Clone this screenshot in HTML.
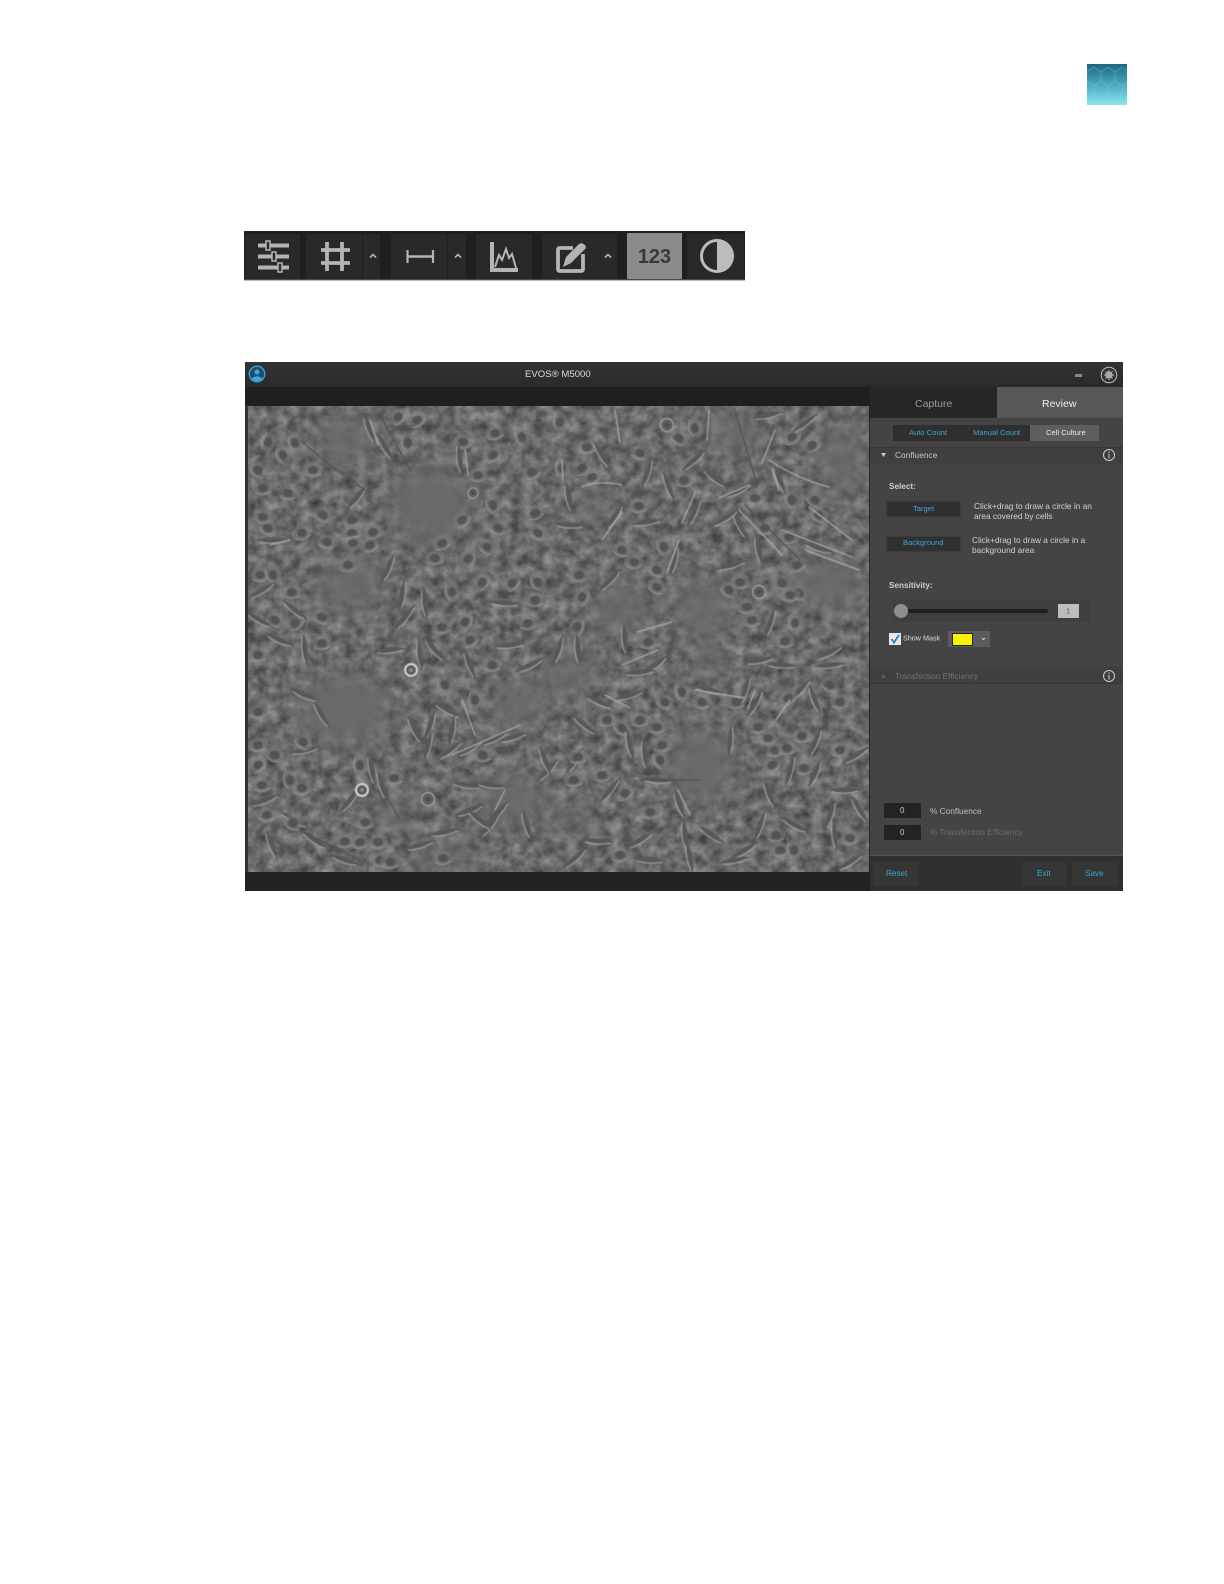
<!DOCTYPE html>
<html><head><meta charset="utf-8">
<style>
html,body{margin:0;padding:0;background:#fff}
body{width:1224px;height:1584px;position:relative;overflow:hidden;font-family:"Liberation Sans",sans-serif}
.a{position:absolute}
.t{position:absolute;white-space:nowrap;line-height:1;transform:translateY(-50%);filter:blur(.25px)}
.b{color:#3ea6d6}
.w{color:#d2d2d2}
.btn{position:absolute;background:#303030;box-shadow:0 0 2px #2c2c2c}
</style></head>
<body>
<!-- logo -->
<svg class="a" style="left:1087px;top:64px" width="40" height="41" viewBox="0 0 40 41">
<defs><linearGradient id="lg" x1="0" y1="0" x2="0" y2="1"><stop offset="0" stop-color="#1b6680"/><stop offset=".5" stop-color="#4aa9bd"/><stop offset="1" stop-color="#8ae4f2"/></linearGradient></defs>
<rect width="40" height="41" fill="url(#lg)"/>
<path d="M0 8L7 3L14 8V17L7 22L0 17M14 8L21 3L28 8V17L21 22L14 17M28 8L35 3L40 7M28 17L35 22L40 18M7 22V31L14 36M21 22V31L14 36V41M21 31L28 36M35 22V31L28 36" fill="none" stroke="#8fd0de" stroke-opacity=".4" stroke-width=".8"/>
</svg>

<!-- toolbar -->
<svg class="a" style="left:244px;top:231px" width="501" height="50" viewBox="244 231 501 50">
<rect x="244" y="231" width="501" height="49" fill="#1f1f1f"/>
<rect x="244" y="279.500" width="501" height="1" fill="#777"/>
<g fill="#292929">
<rect x="245" y="234" width="55" height="45"/><rect x="306" y="234" width="56" height="45"/><rect x="363" y="234" width="17" height="45"/>
<rect x="391" y="234" width="56" height="45"/><rect x="448" y="234" width="18" height="45"/><rect x="476" y="234" width="56" height="45"/>
<rect x="542" y="234" width="75" height="45"/><rect x="687" y="234" width="57" height="45"/>
</g>
<rect x="627" y="233" width="55" height="46" fill="#8b8b8b" rx="1"/>
<g stroke="#b4b4b4" fill="none">
<path d="M258 245.500H289M258 256.500H289M258 267.500H289" stroke-width="4"/>
<g fill="#292929" stroke-width="1.500"><rect x="266" y="241" width="4" height="9"/><rect x="272" y="252" width="4" height="9"/><rect x="278" y="263" width="4" height="9"/></g>
<path d="M327 242V271M342 242V271M321 250H350M321 263H350" stroke-width="3.800"/>
<path d="M407.500 250V263M433 250V263" stroke-width="2.200"/><path d="M408 256.500H433" stroke-width="2.600"/>
<path d="M492 242V270H518" stroke-width="4"/>
<path d="M495 267L499 255L502 260L506 249L509 258L512 254L516 268" stroke-width="2"/>
<path d="M583 254V269Q583 271 581 271H560Q558 271 558 269V250Q558 248 560 248H573" stroke-width="3.800"/>
<path d="M370 257.500L373 254.500L376 257.500M455 257.500L458 254.500L461 257.500M605 257.500L608 254.500L611 257.500" stroke-width="1.600"/>
</g>
<path d="M563 267L566 257L579 244Q582 242 585 245Q587 248 584 250L571 263Z" fill="#b4b4b4"/>
<circle cx="717" cy="256" r="15.500" fill="#292929" stroke="#bcbcbc" stroke-width="3"/>
<path d="M717 240.500A15.500 15.500 0 0 1 717 271.500Z" fill="#bcbcbc"/>
<text x="654.500" y="263" text-anchor="middle" font-family="'Liberation Sans',sans-serif" font-weight="700" font-size="20" fill="#383838">123</text>
</svg>

<!-- figure -->
<div class="a" style="left:245px;top:362px;width:878px;height:529px;background:#262626"></div>
<div class="a" style="left:245px;top:362px;width:878px;height:25px;background:linear-gradient(#333,#2a2a2a)"></div>
<div class="a" style="left:245px;top:387px;width:625px;height:19px;background:#1f1f1f"></div>
<div class="a" style="left:245px;top:872px;width:625px;height:19px;background:#222"></div>
<div class="a" style="left:245px;top:405px;width:3px;height:467px;background:#333"></div>

<!-- microscope image -->
<svg class="a" style="left:248px;top:406px" width="621" height="466" viewBox="248 406 621 466">
<defs>
<filter id="nz" x="0" y="0" width="100%" height="100%" color-interpolation-filters="sRGB">
<feTurbulence type="fractalNoise" baseFrequency=".09" numOctaves="3" seed="11"/>
<feColorMatrix values=".75 0 0 0 .04 .75 0 0 0 .04 .75 0 0 0 .04 0 0 0 0 1"/>
</filter>
<filter id="bl" x="-20%" y="-20%" width="140%" height="140%"><feGaussianBlur stdDeviation="14"/></filter>
<filter id="sf"><feGaussianBlur stdDeviation=".55"/></filter>
<mask id="mk" maskUnits="userSpaceOnUse" x="248" y="406" width="621" height="466">
<rect x="248" y="406" width="621" height="466" fill="#fff"/>
<g filter="url(#bl)" fill="#000">
<ellipse cx="430" cy="505" rx="42" ry="42"/><ellipse cx="345" cy="440" rx="30" ry="25"/><ellipse cx="350" cy="585" rx="35" ry="26"/>
<ellipse cx="345" cy="709" rx="46" ry="38"/><ellipse cx="395" cy="812" rx="22" ry="14"/><ellipse cx="518" cy="705" rx="24" ry="26"/>
<ellipse cx="512" cy="800" rx="34" ry="26"/><ellipse cx="445" cy="858" rx="40" ry="12"/><ellipse cx="828" cy="583" rx="36" ry="26"/>
<ellipse cx="842" cy="462" rx="22" ry="38"/><ellipse cx="732" cy="433" rx="22" ry="24"/><ellipse cx="702" cy="607" rx="28" ry="32"/>
<ellipse cx="595" cy="507" rx="24" ry="14"/><ellipse cx="619" cy="607" rx="32" ry="22"/><ellipse cx="702" cy="765" rx="32" ry="42"/>
<ellipse cx="569" cy="675" rx="22" ry="26"/><ellipse cx="709" cy="665" rx="16" ry="16"/><ellipse cx="569" cy="819" rx="16" ry="20"/>
</g></mask>
<g id="c"><ellipse rx="10" ry="8" fill="#7c7c7c" opacity=".45"/><ellipse rx="5" ry="4" fill="#535353"/><path d="M-8 4Q0 9 8 3" stroke="#969696" stroke-width=".9" fill="none"/></g>
<g id="s"><path d="M-17 0Q0-5 17 0Q0 5-17 0" fill="#585858"/><path d="M-13 2Q0 5 13 1" stroke="#a2a2a2" stroke-width="1" fill="none"/></g>
<g id="r"><circle r="6" fill="#595959"/><circle r="6" fill="none" stroke="#dcdcdc" stroke-width="1.800"/><circle r="2" fill="#888"/></g>
<g id="q"><circle r="6.500" fill="#5e5e5e"/><circle r="6.500" fill="none" stroke="#9c9c9c" stroke-width="1.500"/><circle r="2.500" fill="#4e4e4e"/></g>
</defs>
<rect x="248" y="406" width="621" height="466" fill="#6a6a6a"/>
<rect x="248" y="406" width="621" height="466" filter="url(#nz)" mask="url(#mk)" opacity=".55"/>
<g filter="url(#sf)">
<use href="#c" transform="translate(295 443)rotate(80)"/><use href="#c" transform="translate(283 455)rotate(70)"/><use href="#c" transform="translate(268 442)rotate(110)"/><use href="#c" transform="translate(313 470)"/><use href="#c" transform="translate(288 493)rotate(10)"/><use href="#c" transform="translate(263 488)"/><use href="#c" transform="translate(263 517)rotate(20)"/><use href="#c" transform="translate(268 528)rotate(30)"/><use href="#c" transform="translate(302 533)rotate(-10)"/><use href="#c" transform="translate(323 515)rotate(30)"/><use href="#c" transform="translate(352 520)"/><use href="#c" transform="translate(352 533)rotate(-10)"/><use href="#c" transform="translate(373 532)rotate(-10)"/><use href="#c" transform="translate(353 543)rotate(170)"/><use href="#c" transform="translate(327 542)rotate(15)"/><use href="#c" transform="translate(370 545)rotate(-20)"/><use href="#c" transform="translate(348 565)"/><use href="#s" transform="translate(357 497)rotate(-50)"/><use href="#s" transform="translate(388 568)rotate(-65)"/><use href="#c" transform="translate(292 592)"/><use href="#c" transform="translate(260 575)"/><use href="#c" transform="translate(273 575)rotate(60)"/><use href="#s" transform="translate(370 430)rotate(70)"/><use href="#s" transform="translate(385 447)rotate(60)"/><use href="#c" transform="translate(398 417)rotate(-40)"/><use href="#c" transform="translate(417 420)rotate(-30)"/><use href="#c" transform="translate(408 443)rotate(80)"/><use href="#c" transform="translate(463 442)"/><use href="#s" transform="translate(460 460)rotate(85)"/><use href="#c" transform="translate(495 433)rotate(-10)"/><use href="#c" transform="translate(493 455)rotate(-30)"/><use href="#c" transform="translate(522 437)rotate(70)"/><use href="#c" transform="translate(532 472)rotate(-20)"/><use href="#c" transform="translate(478 475)"/><use href="#c" transform="translate(462 520)rotate(-40)"/><use href="#c" transform="translate(493 505)rotate(70)"/><use href="#c" transform="translate(498 528)rotate(20)"/><use href="#c" transform="translate(535 513)rotate(-20)"/><use href="#c" transform="translate(538 533)rotate(40)"/><use href="#c" transform="translate(487 547)rotate(40)"/><use href="#c" transform="translate(435 558)"/><use href="#c" transform="translate(442 543)rotate(-20)"/><use href="#c" transform="translate(468 559)rotate(-60)"/><use href="#c" transform="translate(482 582)rotate(-50)"/><use href="#c" transform="translate(512 583)rotate(-40)"/><use href="#c" transform="translate(452 592)rotate(80)"/><use href="#s" transform="translate(402 595)rotate(-80)"/><use href="#s" transform="translate(425 603)rotate(85)"/><use href="#c" transform="translate(535 600)"/><use href="#c" transform="translate(538 582)rotate(60)"/>
<use href="#c" transform="translate(275 620)rotate(30)"/><use href="#c" transform="translate(295 623)rotate(-30)"/><use href="#c" transform="translate(322 617)rotate(30)"/><use href="#s" transform="translate(405 617)rotate(-50)"/><use href="#c" transform="translate(442 627)"/><use href="#c" transform="translate(465 622)rotate(-60)"/><use href="#s" transform="translate(505 603)rotate(5)"/><use href="#c" transform="translate(528 623)"/><use href="#c" transform="translate(258 470)rotate(40)"/><use href="#s" transform="translate(262 590)rotate(-30)"/><use href="#s" transform="translate(272 540)rotate(0)"/><use href="#s" transform="translate(295 610)rotate(40)"/><use href="#s" transform="translate(260 620)rotate(30)"/>
<use href="#c" transform="translate(560 422)rotate(90)"/><use href="#c" transform="translate(587 447)"/><use href="#s" transform="translate(602 455)rotate(60)"/><use href="#c" transform="translate(562 468)rotate(90)"/><use href="#c" transform="translate(582 468)rotate(-30)"/><use href="#c" transform="translate(592 477)rotate(-20)"/><use href="#c" transform="translate(679 438)rotate(40)"/><use href="#c" transform="translate(695 428)rotate(80)"/><use href="#c" transform="translate(640 453)rotate(20)"/><use href="#s" transform="translate(694 460)rotate(-40)"/><use href="#s" transform="translate(647 473)rotate(-70)"/><use href="#c" transform="translate(684 480)"/><use href="#s" transform="translate(669 487)rotate(70)"/><use href="#c" transform="translate(639 506)"/><use href="#s" transform="translate(569 498)rotate(80)"/><use href="#s" transform="translate(614 517)rotate(-55)"/><use href="#s" transform="translate(647 522)rotate(-8)"/><use href="#s" transform="translate(570 525)rotate(5)"/><use href="#s" transform="translate(694 512)rotate(-65)"/><use href="#c" transform="translate(622 550)rotate(20)"/><use href="#c" transform="translate(664 547)rotate(70)"/><use href="#c" transform="translate(680 547)rotate(80)"/><use href="#c" transform="translate(579 575)"/><use href="#s" transform="translate(610 580)rotate(-45)"/><use href="#c" transform="translate(634 562)"/><use href="#c" transform="translate(657 570)rotate(30)"/><use href="#c" transform="translate(657 587)rotate(30)"/><use href="#c" transform="translate(582 597)rotate(-60)"/><use href="#c" transform="translate(577 627)rotate(-70)"/><use href="#s" transform="translate(674 560)rotate(-75)"/><use href="#s" transform="translate(732 565)rotate(-15)"/><use href="#c" transform="translate(740 582)rotate(10)"/><use href="#c" transform="translate(729 590)rotate(40)"/><use href="#c" transform="translate(782 583)rotate(20)"/><use href="#c" transform="translate(799 593)rotate(30)"/><use href="#c" transform="translate(790 595)"/><use href="#c" transform="translate(747 607)"/><use href="#c" transform="translate(752 620)"/><use href="#c" transform="translate(795 623)rotate(90)"/><use href="#s" transform="translate(770 623)rotate(-70)"/><use href="#c" transform="translate(755 498)"/><use href="#s" transform="translate(739 490)rotate(-25)"/><use href="#s" transform="translate(715 478)rotate(40)"/><use href="#c" transform="translate(792 500)rotate(70)"/><use href="#c" transform="translate(815 500)rotate(40)"/><use href="#c" transform="translate(819 515)rotate(40)"/><use href="#c" transform="translate(812 445)rotate(-30)"/><use href="#c" transform="translate(792 437)rotate(-30)"/><use href="#s" transform="translate(805 423)rotate(-35)"/><use href="#c" transform="translate(765 528)"/><use href="#s" transform="translate(740 525)rotate(65)"/><use href="#s" transform="translate(725 518)rotate(-30)"/><use href="#s" transform="translate(759 550)rotate(80)"/><use href="#c" transform="translate(789 537)"/><use href="#s" transform="translate(819 548)rotate(20)"/><use href="#c" transform="translate(797 565)rotate(-20)"/><use href="#s" transform="translate(780 480)rotate(70)"/><use href="#s" transform="translate(768 415)rotate(-10)"/>
<!-- lower left -->
<use href="#s" transform="translate(305 695)rotate(25)"/><use href="#s" transform="translate(322 715)rotate(60)"/><use href="#c" transform="translate(258 712)"/><use href="#c" transform="translate(258 745)"/><use href="#s" transform="translate(305 750)rotate(-10)"/><use href="#c" transform="translate(275 755)rotate(20)"/><use href="#c" transform="translate(303 742)rotate(40)"/><use href="#c" transform="translate(258 765)rotate(-40)"/><use href="#c" transform="translate(290 780)rotate(80)"/><use href="#c" transform="translate(262 785)"/><use href="#c" transform="translate(302 788)"/><use href="#s" transform="translate(265 800)rotate(-20)"/><use href="#c" transform="translate(267 815)"/><use href="#s" transform="translate(295 820)rotate(30)"/><use href="#c" transform="translate(293 823)rotate(30)"/><use href="#s" transform="translate(272 845)rotate(70)"/><use href="#s" transform="translate(315 840)rotate(35)"/><use href="#s" transform="translate(345 860)rotate(20)"/><use href="#c" transform="translate(365 822)"/><use href="#c" transform="translate(345 841)"/><use href="#c" transform="translate(360 842)"/><use href="#c" transform="translate(378 842)"/><use href="#c" transform="translate(380 860)"/><use href="#c" transform="translate(258 655)"/><use href="#c" transform="translate(322 643)"/><use href="#s" transform="translate(280 640)rotate(25)"/><use href="#s" transform="translate(305 650)rotate(85)"/><use href="#s" transform="translate(390 650)rotate(-5)"/><use href="#s" transform="translate(420 655)rotate(85)"/><use href="#s" transform="translate(435 650)rotate(50)"/><use href="#c" transform="translate(470 640)rotate(-30)"/><use href="#s" transform="translate(470 665)rotate(70)"/><use href="#c" transform="translate(492 665)"/><use href="#s" transform="translate(530 665)rotate(-25)"/><use href="#s" transform="translate(510 645)rotate(-5)"/><use href="#c" transform="translate(445 685)rotate(60)"/><use href="#c" transform="translate(475 700)rotate(90)"/><use href="#s" transform="translate(430 725)rotate(-70)"/><use href="#s" transform="translate(415 730)rotate(65)"/><use href="#s" transform="translate(428 745)rotate(-75)"/><use href="#s" transform="translate(448 710)rotate(30)"/><use href="#s" transform="translate(452 730)rotate(-80)"/><use href="#s" transform="translate(450 750)rotate(-35)"/><use href="#s" transform="translate(470 748)rotate(-30)"/><use href="#s" transform="translate(495 738)rotate(-25)"/><use href="#s" transform="translate(513 737)rotate(-15)"/><use href="#s" transform="translate(467 785)rotate(10)"/><use href="#s" transform="translate(492 785)rotate(8)"/><use href="#s" transform="translate(350 800)rotate(-50)"/><use href="#s" transform="translate(372 770)rotate(80)"/><use href="#s" transform="translate(382 785)rotate(75)"/><use href="#c" transform="translate(360 765)rotate(90)"/><use href="#c" transform="translate(394 778)"/><use href="#s" transform="translate(420 845)rotate(-15)"/><use href="#s" transform="translate(445 832)rotate(-10)"/><use href="#c" transform="translate(443 858)"/><use href="#c" transform="translate(390 862)"/><use href="#s" transform="translate(470 810)rotate(-20)"/><use href="#s" transform="translate(498 812)rotate(-45)"/><use href="#s" transform="translate(490 825)rotate(-50)"/><use href="#s" transform="translate(480 820)rotate(40)"/><use href="#s" transform="translate(527 825)rotate(75)"/><use href="#s" transform="translate(548 770)rotate(-45)"/><use href="#s" transform="translate(545 760)rotate(70)"/><use href="#c" transform="translate(483 755)"/>
<!-- lower right -->
<use href="#s" transform="translate(558 650)rotate(-70)"/><use href="#s" transform="translate(578 650)rotate(85)"/><use href="#s" transform="translate(625 640)rotate(85)"/><use href="#c" transform="translate(648 642)"/><use href="#s" transform="translate(655 665)rotate(-35)"/><use href="#s" transform="translate(640 672)rotate(-5)"/><use href="#s" transform="translate(600 702)rotate(25)"/><use href="#s" transform="translate(630 695)rotate(-15)"/><use href="#c" transform="translate(665 702)rotate(30)"/><use href="#c" transform="translate(682 692)rotate(80)"/><use href="#c" transform="translate(702 702)rotate(10)"/><use href="#c" transform="translate(736 702)"/><use href="#s" transform="translate(710 690)rotate(15)"/><use href="#s" transform="translate(755 703)rotate(-60)"/><use href="#c" transform="translate(607 720)"/><use href="#s" transform="translate(585 725)rotate(40)"/><use href="#c" transform="translate(622 728)rotate(40)"/><use href="#c" transform="translate(640 720)"/><use href="#c" transform="translate(657 727)"/><use href="#c" transform="translate(662 745)"/><use href="#s" transform="translate(630 745)rotate(80)"/><use href="#s" transform="translate(645 755)rotate(85)"/><use href="#s" transform="translate(575 760)rotate(-55)"/><use href="#c" transform="translate(578 757)"/><use href="#c" transform="translate(574 780)"/><use href="#c" transform="translate(660 760)rotate(70)"/><use href="#s" transform="translate(730 740)rotate(-85)"/><use href="#c" transform="translate(602 775)"/><use href="#s" transform="translate(610 790)rotate(-50)"/><use href="#c" transform="translate(625 793)rotate(-30)"/><use href="#c" transform="translate(650 812)"/><use href="#s" transform="translate(658 780)rotate(5)"/><use href="#s" transform="translate(680 805)rotate(70)"/><use href="#s" transform="translate(685 835)rotate(85)"/><use href="#s" transform="translate(712 835)rotate(35)"/><use href="#s" transform="translate(640 840)rotate(-30)"/><use href="#s" transform="translate(598 841)rotate(5)"/><use href="#c" transform="translate(620 855)"/><use href="#s" transform="translate(575 858)rotate(-40)"/><use href="#s" transform="translate(650 860)rotate(5)"/><use href="#s" transform="translate(690 858)rotate(80)"/><use href="#s" transform="translate(745 690)rotate(-70)"/><use href="#s" transform="translate(760 660)rotate(-10)"/><use href="#c" transform="translate(785 641)"/><use href="#s" transform="translate(782 665)rotate(5)"/><use href="#s" transform="translate(830 652)rotate(-25)"/><use href="#s" transform="translate(830 665)rotate(-5)"/><use href="#s" transform="translate(800 690)rotate(-45)"/><use href="#c" transform="translate(788 698)rotate(-30)"/><use href="#c" transform="translate(830 685)rotate(30)"/><use href="#c" transform="translate(840 702)"/><use href="#s" transform="translate(815 700)rotate(70)"/><use href="#c" transform="translate(758 727)"/><use href="#c" transform="translate(768 738)"/><use href="#c" transform="translate(775 750)"/><use href="#c" transform="translate(787 748)"/><use href="#c" transform="translate(802 736)"/><use href="#s" transform="translate(815 742)rotate(-65)"/><use href="#c" transform="translate(840 750)"/><use href="#s" transform="translate(856 755)rotate(-30)"/><use href="#s" transform="translate(790 770)rotate(-75)"/><use href="#c" transform="translate(772 765)rotate(-30)"/><use href="#c" transform="translate(804 768)"/><use href="#s" transform="translate(815 773)rotate(-65)"/><use href="#s" transform="translate(845 790)rotate(0)"/><use href="#s" transform="translate(770 795)rotate(70)"/><use href="#s" transform="translate(830 815)rotate(-70)"/><use href="#s" transform="translate(860 810)rotate(60)"/><use href="#s" transform="translate(760 825)rotate(-70)"/><use href="#c" transform="translate(776 835)"/><use href="#s" transform="translate(795 825)rotate(30)"/><use href="#c" transform="translate(780 850)"/><use href="#c" transform="translate(794 850)rotate(80)"/><use href="#s" transform="translate(835 835)rotate(85)"/><use href="#c" transform="translate(850 838)"/><use href="#s" transform="translate(745 850)rotate(-30)"/><use href="#s" transform="translate(735 860)rotate(-10)"/><use href="#s" transform="translate(850 862)rotate(-30)"/>
<use href="#q" transform="translate(473 493)scale(.8)"/><use href="#r" transform="translate(411 670)"/><use href="#r" transform="translate(362 790)"/><use href="#q" transform="translate(428 799)"/><use href="#q" transform="translate(667 425)"/><use href="#q" transform="translate(759 592)"/>
<g fill="none" stroke-linecap="round">
<path d="M769 460Q800 480 829 487M772 470L779 490M719 498L749 485M739 510L782 555M782 530L852 557M805 550L859 570M809 507L852 540M695 493L682 523M622 512L602 540M709 410L707 440M775 430L762 463M615 410L620 443M582 487Q600 480 622 485M679 540L667 573M562 460L563 480M465 450L468 475M370 420L378 445M290 540L270 545M495 810L505 790M462 700L475 735M452 755L520 725M790 700L776 720M678 790L690 815M622 665L658 650M637 632L672 622M695 690L745 698M605 695L630 708M755 690L748 708" stroke="#ababab" stroke-width="1.200"/>
<path d="M734 408L755 477M330 465L365 490M300 440L335 470M380 415L410 470M745 505L800 560M640 780L700 780M380 785L400 820M300 830L360 860" stroke="#535353" stroke-width="1.400"/>
</g>
</g>
</svg>

<!-- right panel -->
<div class="a" style="left:870px;top:387px;width:253px;height:504px;background:#444"></div>
<div class="a" style="left:870px;top:387px;width:127px;height:31px;background:#262626"></div>
<div class="a" style="left:997px;top:387px;width:126px;height:31px;background:#575757"></div>
<div class="a" style="left:893px;top:425px;width:137px;height:16px;background:#2f2f2f"></div>
<div class="a" style="left:1030px;top:425px;width:69px;height:16px;background:#5e5e5e"></div>
<div class="a" style="left:870px;top:447px;width:253px;height:16px;background:#3f3f3f;border-top:1px solid #363636"></div>
<div class="a" style="left:893px;top:600px;width:197px;height:22px;background:#3f3f3f"></div>
<div class="a" style="left:870px;top:667px;width:253px;height:16px;background:#3f3f3f;border-bottom:1px solid #363636"></div>
<div class="a" style="left:870px;top:855px;width:253px;height:36px;background:#303030;border-top:1px solid #555;box-sizing:border-box"></div>

<div class="t" style="left:915px;top:403.500px;font-size:10.500px;color:#9a9a9a">Capture</div>
<div class="t" style="left:1042px;top:403.500px;font-size:10.500px;color:#eee">Review</div>
<div class="t b" style="left:909px;top:432.500px;font-size:7.600px">Auto Count</div>
<div class="t b" style="left:973px;top:432.500px;font-size:7.600px">Manual Count</div>
<div class="t" style="left:1046px;top:432.500px;font-size:7.600px;color:#e8e8e8">Cell Culture</div>
<svg class="a" style="left:880px;top:452px" width="7" height="6"><path d="M1 1H6L3.500 5Z" fill="#ccc"/></svg>
<div class="t" style="left:895px;top:455px;font-size:8.400px;color:#c4c4c4">Confluence</div>
<svg class="a" style="left:1102px;top:448px" width="14" height="14"><circle cx="7" cy="7" r="5.500" fill="none" stroke="#ccc"/><path d="M7 6V10.500M7 3.500V5" stroke="#ccc"/></svg>
<div class="t" style="left:889px;top:487px;font-size:8.200px;font-weight:700;color:#cfcfcf">Select:</div>
<div class="btn" style="left:887px;top:502px;width:73px;height:14px"></div>
<div class="t b" style="left:913px;top:509px;font-size:7.600px">Target</div>
<div class="t w" style="left:974px;top:506px;font-size:8.300px">Click+drag to draw a circle in an</div>
<div class="t w" style="left:974px;top:516px;font-size:8.300px">area covered by cells</div>
<div class="btn" style="left:887px;top:537px;width:73px;height:14px"></div>
<div class="t b" style="left:903px;top:543px;font-size:7.600px">Background</div>
<div class="t w" style="left:972px;top:540px;font-size:8.300px">Click+drag to draw a circle in a</div>
<div class="t w" style="left:972px;top:550px;font-size:8.300px">background area</div>
<div class="t" style="left:889px;top:586px;font-size:8.200px;font-weight:700;color:#cfcfcf">Sensitivity:</div>
<div class="a" style="left:905px;top:609px;width:143px;height:4px;background:#202020;border-radius:2px"></div>
<div class="a" style="left:894px;top:604px;width:14px;height:14px;border-radius:50%;background:#8e8e8e"></div>
<div class="a" style="left:1058px;top:604px;width:21px;height:14px;background:#bdbdbd"></div>
<div class="t" style="left:1066px;top:611px;font-size:7.500px;color:#555">1</div>
<svg class="a" style="left:889px;top:633px" width="12" height="12"><rect width="12" height="12" fill="#e8e8e8"/><path d="M2.500 6L5 9.500L10 2" fill="none" stroke="#2a7fc0" stroke-width="1.800"/></svg>
<div class="t" style="left:903px;top:638px;font-size:7.200px;color:#ddd">Show Mask</div>
<div class="a" style="left:948px;top:631px;width:42px;height:16px;background:#5c5c5c"></div>
<div class="a" style="left:952px;top:633px;width:19px;height:11px;background:#f7f300;border:1px solid #222;box-sizing:content-box"></div>
<svg class="a" style="left:980px;top:636px" width="7" height="6"><path d="M2 2L3.500 3.500L5 2" fill="none" stroke="#ccc"/></svg>
<svg class="a" style="left:880px;top:673px" width="7" height="6"><path d="M1 5H6L3.500 1Z" fill="#5c5c5c"/></svg>
<div class="t" style="left:895px;top:676px;font-size:8.300px;color:#727272">Transfection Efficiency</div>
<svg class="a" style="left:1102px;top:669px" width="14" height="14"><circle cx="7" cy="7" r="5.500" fill="none" stroke="#ccc"/><path d="M7 6V10.500M7 3.500V5" stroke="#ccc"/></svg>
<div class="a" style="left:884px;top:803px;width:37px;height:15px;background:#232323"></div>
<div class="t" style="left:900px;top:811px;font-size:8px;color:#ccc">0</div>
<div class="t" style="left:930px;top:810.500px;font-size:8.300px;color:#bcbcbc">% Confluence</div>
<div class="a" style="left:884px;top:825px;width:37px;height:15px;background:#232323"></div>
<div class="t" style="left:900px;top:833px;font-size:8px;color:#ccc">0</div>
<div class="t" style="left:930px;top:832px;font-size:8.300px;color:#6c6c6c">% Transfection Efficiency</div>
<div class="a" style="left:873px;top:862px;width:45px;height:24px;background:#363636"></div>
<div class="a" style="left:1022px;top:862px;width:45px;height:24px;background:#363636"></div>
<div class="a" style="left:1072px;top:862px;width:45px;height:24px;background:#363636"></div>
<div class="t b" style="left:886px;top:873.500px;font-size:8.200px">Reset</div>
<div class="t b" style="left:1037px;top:873.500px;font-size:8.200px">Exit</div>
<div class="t b" style="left:1085px;top:873.500px;font-size:8.200px">Save</div>

<!-- title bar -->
<div class="t" style="left:525px;top:375px;font-size:9.600px;color:#dcdcdc">EVOS® M5000</div>
<svg class="a" style="left:248px;top:365px" width="18" height="18"><circle cx="9" cy="9" r="7.800" fill="#1e4f6c" stroke="#3aa7dc" stroke-width="1.300"/><circle cx="9" cy="7" r="2.500" fill="#3aa7dc"/><path d="M3.500 14Q9 8.500 14.500 14Q9 18 3.500 14Z" fill="#3aa7dc"/></svg>
<div class="a" style="left:1075px;top:374px;width:7px;height:3px;background:#888"></div>
<svg class="a" style="left:1100px;top:366px" width="18" height="18"><circle cx="9" cy="9" r="7.800" fill="#333" stroke="#bbb"/><circle cx="9" cy="9" r="3.600" fill="#aaa"/><circle cx="9" cy="9" r="1.300" fill="#444"/><path d="M9 4V14M4 9H14M5.500 5.500L12.500 12.500M12.500 5.500L5.500 12.500" stroke="#aaa" stroke-width="1.200"/></svg>
</body></html>
